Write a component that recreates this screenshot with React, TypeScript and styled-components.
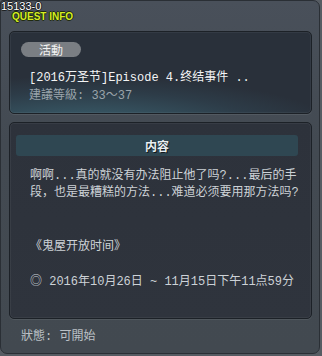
import React from 'react';
import styled, {createGlobalStyle} from 'styled-components';

const GlobalStyle=createGlobalStyle`
  html,body{
    margin: 0;
    padding: 0;
    background: #565c63;
  }
  body{
    font-family: "Liberation Mono", "Noto Sans CJK SC", monospace;
    font-size: 12px;
  }
`

const Window=styled.div`
  width: 320px;
  height: 354px;
  box-sizing: border-box;
  border: 1px solid #2a2f35;
  border-radius: 3px 7px 7px 7px;
  background: linear-gradient(180deg, #49505a 0%, #434a52 40%, #424950 100%);
  display: flex;
  flex-direction: column;
`

const Header=styled.div`
  display: flex;
  flex-direction: column;
  font-family: "Liberation Sans", Arial, sans-serif;
  >.id{
    font-size: 11px;
    line-height: 11px;
    color: #ffffff;
    text-shadow: 1px 0 0 #1a1d20, -1px 0 0 #1a1d20, 0 1px 0 #1a1d20, 0 -1px 0 #1a1d20;
  }
  >.title{
    margin-left: 11px;
    font-size: 10px;
    line-height: 10px;
    font-weight: bold;
    color: #d6ee22;
    text-shadow: 1px 0 0 #1f2a10, -1px 0 0 #1f2a10, 0 1px 0 #1f2a10, 0 -1px 0 #1f2a10;
  }
`

const Panel=styled.div<{$glow?: boolean}>`
  margin: 0 7px 0 8px;
  box-sizing: border-box;
  border: 1px solid #1c2127;
  border-radius: 5px;
  box-shadow: inset 0 0 0 1px rgba(255,255,255,0.05), 0 1px 0 rgba(255,255,255,0.08);
  background: ${p=>p.$glow
    ? 'radial-gradient(ellipse 95% 75% at 25% 120%, #3d606e 0%, #35515e 30%, #2d3c48 62%, #29303a 88%)'
    : 'linear-gradient(180deg, #2d323b 0%, #2f343d 100%)'};
`

const EventPanel=styled(Panel)`
  margin-top: 9px;
  height: 83px;
  padding: 10px 10px 0 11px;
`

const Badge=styled.div`
  width: 60px;
  height: 15px;
  border-radius: 8px;
  background: #7a7e83;
  color: #f2f2f2;
  font-family: "Noto Sans CJK SC", sans-serif;
  font-size: 12px;
  line-height: 15px;
  text-align: center;
`

const Line=styled.div<{$color: string; $indent?: number}>`
  color: ${p=>p.$color};
  line-height: 18px;
  padding-left: ${p=>p.$indent ?? 0}px;
  white-space: nowrap;
`

const EventTitle=styled(Line)`
  margin-top: 12px;
`

const ContentPanel=styled(Panel)`
  margin-top: 8px;
  height: 197px;
  padding: 12px 13px 0 6px;
`

const SectionBar=styled.div`
  height: 21px;
  border-radius: 3px;
  background: #2f4752;
  color: #e9eff2;
  font-family: "Noto Sans CJK SC", sans-serif;
  font-weight: bold;
  font-size: 12px;
  line-height: 21px;
  text-align: center;
  text-shadow: 1px 1px 0 #11181c;
`

const Body=styled.div<{$top: number}>`
  margin-top: ${p=>p.$top}px;
  padding-left: 14px;
  color: #cdd2d7;
  line-height: 17px;
  white-space: nowrap;
`

const Status=styled.div`
  margin: 9px 0 0 20px;
  color: #bcc1c6;
  line-height: 18px;
`

const App:React.FC=()=>{
  return (
    <>
      <GlobalStyle/>
      <Window>
        <Header>
          <span className='id'>15133-0</span>
          <span className='title'>QUEST INFO</span>
        </Header>
        <EventPanel $glow>
          <Badge>活動</Badge>
          <EventTitle $color='#f3f4f5' $indent={8}>[2016万圣节]Episode 4.终结事件 ..</EventTitle>
          <Line $color='#9aa4ab' $indent={8}>建議等級: 33～37</Line>
        </EventPanel>
        <ContentPanel>
          <SectionBar>内容</SectionBar>
          <Body $top={12}>
            啊啊...真的就没有办法阻止他了吗?...最后的手<br/>
            段，也是最糟糕的方法...难道必须要用那方法吗?
          </Body>
          <Body $top={37}>《鬼屋开放时间》</Body>
          <Body $top={18}>◎ 2016年10月26日 ~ 11月15日下午11点59分</Body>
        </ContentPanel>
        <Status>狀態: 可開始</Status>
      </Window>
    </>
  )
}

export default App;
